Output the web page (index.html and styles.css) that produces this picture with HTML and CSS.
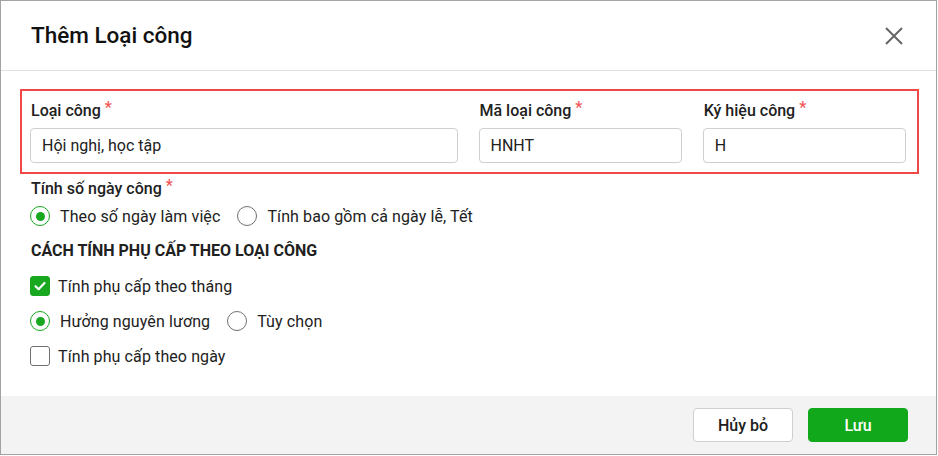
FILE: index.html
```html
<!DOCTYPE html>
<html lang="vi">
<head>
    <meta charset="UTF-8">
    <title>Thêm Loại công</title>
    <link rel="stylesheet" href="styles.css">
</head>
<body>
    <div class="dialog">
        <div class="dialog-header">
            <h1 class="dialog-title">Thêm Loại công</h1>
            <button class="close-btn" title="Đóng">
                <svg width="18" height="18" viewBox="0 0 18 18"><path d="M1 1 L17 17 M17 1 L1 17" stroke="#666" stroke-width="2" fill="none"/></svg>
            </button>
        </div>

        <div class="dialog-body">
            <div class="field-group">
                <div class="field field-wide">
                    <label class="field-label">Loại công <span class="req">*</span></label>
                    <input class="text-input" type="text" value="Hội nghị, học tập">
                </div>
                <div class="field">
                    <label class="field-label">Mã loại công <span class="req">*</span></label>
                    <input class="text-input" type="text" value="HNHT">
                </div>
                <div class="field">
                    <label class="field-label">Ký hiệu công <span class="req">*</span></label>
                    <input class="text-input" type="text" value="H">
                </div>
            </div>

            <div class="section">
                <div class="field-label section-label">Tính số ngày công <span class="req">*</span></div>
                <div class="option-row">
                    <span class="option"><span class="radio checked"></span>Theo số ngày làm việc</span>
                    <span class="option"><span class="radio"></span>Tính bao gồm cả ngày lễ, Tết</span>
                </div>

                <div class="section-title">CÁCH TÍNH PHỤ CẤP THEO LOẠI CÔNG</div>

                <div class="option-row">
                    <span class="option"><span class="checkbox checked">
                        <svg width="14" height="14" viewBox="0 0 14 14"><path d="M2.5 7.2 L5.6 10.2 L11.5 4" stroke="#fff" stroke-width="2.2" fill="none" stroke-linecap="round" stroke-linejoin="round"/></svg>
                    </span>Tính phụ cấp theo tháng</span>
                </div>
                <div class="option-row gap-row">
                    <span class="option"><span class="radio checked"></span>Hưởng nguyên lương</span>
                    <span class="option"><span class="radio"></span>Tùy chọn</span>
                </div>
                <div class="option-row gap-row">
                    <span class="option"><span class="checkbox"></span>Tính phụ cấp theo ngày</span>
                </div>
            </div>
        </div>

        <div class="dialog-footer">
            <button class="btn btn-cancel">Hủy bỏ</button>
            <button class="btn btn-save">Lưu</button>
        </div>
    </div>
</body>
</html>
```

FILE: styles.css
```css
body {
    margin: 0;
    font-family: Roboto, "Noto Sans", sans-serif;
    color: #212121;
    background: #fff;
}

.dialog {
    width: 937px;
    height: 455px;
    box-sizing: border-box;
    border: 1px solid #a3a3a3;
    display: flex;
    flex-direction: column;
    background: #fff;
}

.dialog-header {
    height: 69px;
    border-bottom: 1px solid #e0e0e0;
    display: flex;
    align-items: center;
    justify-content: space-between;
    padding: 0 33px 0 30px;
}

.dialog-title {
    margin: 0 0 2px;
    font-size: 22.5px;
    font-weight: 500;
    color: #111;
}

.close-btn {
    border: none;
    background: none;
    padding: 0;
    width: 18px;
    height: 18px;
    cursor: pointer;
}

.dialog-body {
    flex: 1;
    padding: 18px 17px 0 19px;
}

.field-group {
    border: 2px solid #f04848;
    padding: 10px 11px 9px 8px;
    display: grid;
    grid-template-columns: repeat(4, minmax(0, 1fr));
    column-gap: 21px;
}

.field {
    display: flex;
    flex-direction: column;
    min-width: 0;
}

.field-wide {
    grid-column: span 2;
}

.field-label {
    font-size: 16px;
    font-weight: 500;
    line-height: 20px;
    padding-left: 1px;
}

.req {
    color: #f25656;
    position: relative;
    top: -3px;
}

.text-input {
    margin-top: 7px;
    width: 100%;
    height: 35px;
    box-sizing: border-box;
    border: 1px solid #cfcfcf;
    border-radius: 4px;
    padding: 0 11px;
    font-family: inherit;
    font-size: 16px;
    color: #212121;
    outline: none;
}

.section {
    padding: 5px 0 0 10px;
}

.section-label {
    margin-bottom: 7px;
}

.option-row {
    display: flex;
    gap: 17px;
    height: 20px;
    align-items: center;
    font-size: 16px;
    letter-spacing: 0.1px;
}

.gap-row {
    margin-top: 15px;
}

.option {
    display: flex;
    align-items: center;
}

.radio {
    width: 20px;
    height: 20px;
    box-sizing: border-box;
    border: 1.5px solid #707070;
    border-radius: 50%;
    margin-right: 10px;
    display: flex;
    align-items: center;
    justify-content: center;
}

.radio.checked {
    border-color: #17a820;
}

.radio.checked::after {
    content: "";
    width: 9px;
    height: 9px;
    border-radius: 50%;
    background: #17a820;
}

.checkbox {
    width: 20px;
    height: 20px;
    box-sizing: border-box;
    border: 1.5px solid #707070;
    border-radius: 3px;
    margin-right: 8px;
    display: flex;
    align-items: center;
    justify-content: center;
}

.checkbox.checked {
    background: #17a820;
    border-color: #17a820;
}

.section-title {
    margin: 15px 0;
    font-size: 16px;
    font-weight: 700;
    line-height: 20px;
    padding-left: 1px;
}

.dialog-footer {
    height: 58px;
    background: #f3f3f3;
    display: flex;
    justify-content: flex-end;
    align-items: center;
    gap: 15px;
    padding-right: 28px;
}

.btn {
    width: 100px;
    height: 34px;
    border-radius: 4px;
    font-family: inherit;
    font-size: 16px;
    font-weight: 500;
    cursor: pointer;
}

.btn-cancel {
    background: #fff;
    border: 1px solid #cfcfcf;
    color: #212121;
}

.btn-save {
    background: #12a81c;
    border: 1px solid #12a81c;
    color: #fff;
}
```
